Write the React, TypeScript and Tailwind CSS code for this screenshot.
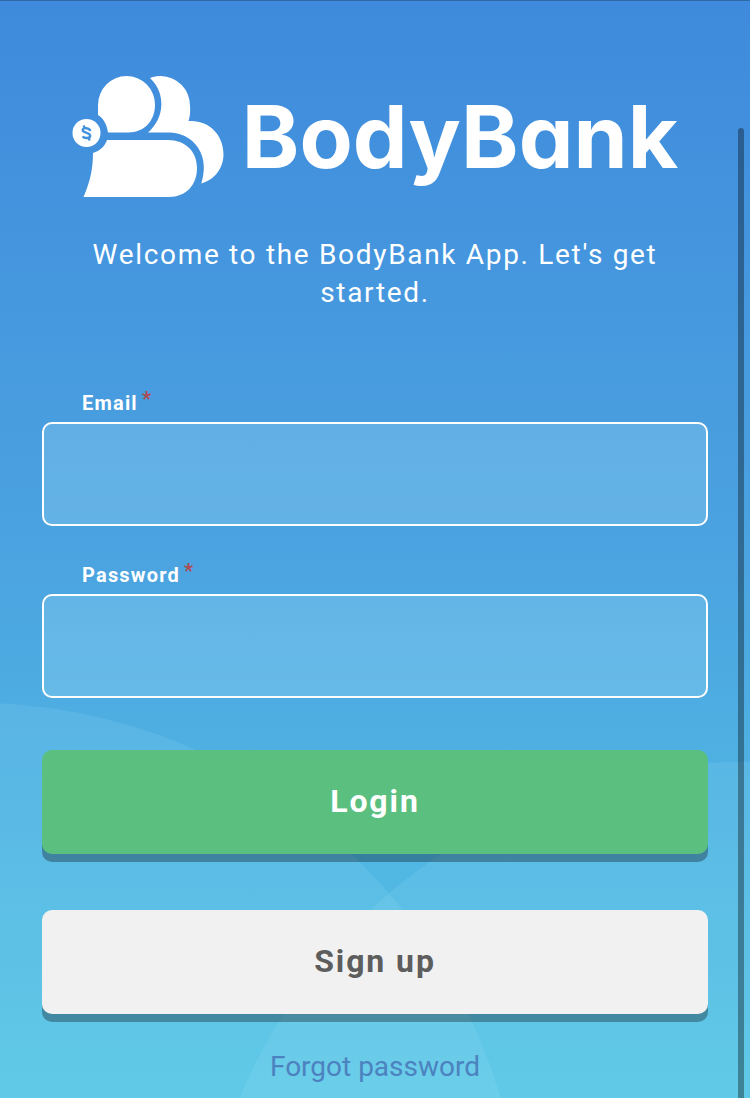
import React from 'react';

function Backdrop() {
  return (
    <svg
      className="absolute inset-0 -z-10 h-full w-full"
      viewBox="0 0 750 1098"
      preserveAspectRatio="none"
      aria-hidden="true"
    >
      <circle cx="-27" cy="1251" r="550" fill="#c4f4ff" fillOpacity="0.1" />
      <circle cx="745" cy="1308" r="548" fill="#c4f4ff" fillOpacity="0.1" />
    </svg>
  );
}

function LogoMark() {
  return (
    <svg className="w-[152px] shrink-0" viewBox="71 76 152 122" fill="#fff" aria-hidden="true">
      <path d="M149 78C153 76.500 156 76 160 76A29.500 29.500 0 0 1 189 106C189.500 112 189 116 187.500 121C207 119.500 222.500 134 222.500 154C222.500 169 213 180 200.300 183.500C206.500 164 201 149 190 140C182.500 134 174 132.500 166 132.500H147C164 118 165 93 149 78Z" />
      <path d="M97 115V105A28.500 29 0 0 1 125.500 76A28.500 28.500 0 0 1 154 105C154 120 144 132.500 127 132.500H107C106 125 103 119 97 115Z" />
      <path d="M106 140H167C184 140 196 151 196 168C196 185 185 197 168 197H82.500C89 182 92 169 92 153C99 151 104 146 106 140Z" />
      <circle cx="85.500" cy="133" r="14" />
      <path
        d="M89.300 131C88.500 127.800 82.300 127.200 81.700 129.900C81.200 133.200 89.500 132 89.200 136C88.800 139 82.800 138.300 81.600 136.300M82.600 125.500L83.600 128M87.800 137.700L88.500 140.500"
        fill="none"
        stroke="#4391dc"
        strokeWidth="2.400"
      />
    </svg>
  );
}

function Field({ id, label, type }: { id: string; label: string; type: string }) {
  return (
    <div className="flex flex-col gap-1">
      <label htmlFor={id} className="flex gap-1 pl-10 text-[20px] leading-[30px] font-bold tracking-[0.06em] text-white">
        {label}
        <span className="-mt-1 text-[#b04a50]">*</span>
      </label>
      <input
        id={id}
        type={type}
        required
        className="h-[104px] w-full rounded-[10px] border-2 border-white bg-[#c8f4ff]/20 px-10 text-[28px] text-white outline-none"
      />
    </div>
  );
}

export default function App() {
  return (
    <main className="relative isolate min-h-screen overflow-hidden border-t border-[#2f6aa8] bg-linear-to-b from-[#3f8adc] via-[#4ba3e0] to-[#55c5e5] px-[42px] pt-[75px] font-['Roboto','Liberation_Sans',sans-serif]">
      <Backdrop />
      <header className="flex items-center justify-center gap-[18px]">
        <LogoMark />
        <h1 className="font-['Inter','Liberation_Sans',sans-serif] text-[87px] leading-[122px] font-bold text-white [font-feature-settings:'cv11']">
          BodyBank
        </h1>
      </header>

      <p className="mt-[38px] text-center text-[28px] leading-[38px] tracking-[0.06em] text-white">
        Welcome to the BodyBank App. Let&apos;s get started.
      </p>

      <form className="mt-[76px] flex flex-col" onSubmit={(e) => e.preventDefault()}>
        <div className="flex flex-col gap-[34px]">
          <Field id="email" label="Email" type="email" />
          <Field id="password" label="Password" type="password" />
        </div>
        <div className="mt-[52px] flex flex-col gap-14 text-[32px] font-bold tracking-[0.06em]">
          <button type="submit" className="h-[104px] rounded-[10px] bg-[#5bbf7f] pb-[2px] text-white shadow-[0_8px_0_rgba(0,0,0,0.3)]">
            Login
          </button>
          <button type="button" className="h-[104px] rounded-[10px] bg-[#f1f1f1] pb-[2px] text-[#5d5d5d] shadow-[0_8px_0_rgba(0,0,0,0.3)]">
            Sign up
          </button>
        </div>
      </form>

      <div className="mt-8 pb-3 text-center text-[28px] leading-[42px]">
        <a href="#forgot" className="text-[#4c82bf]">
          Forgot password
        </a>
      </div>

      <div className="absolute top-[127px] right-[6px] bottom-0 w-[6px] rounded-t-full bg-black/35" />
    </main>
  );
}
